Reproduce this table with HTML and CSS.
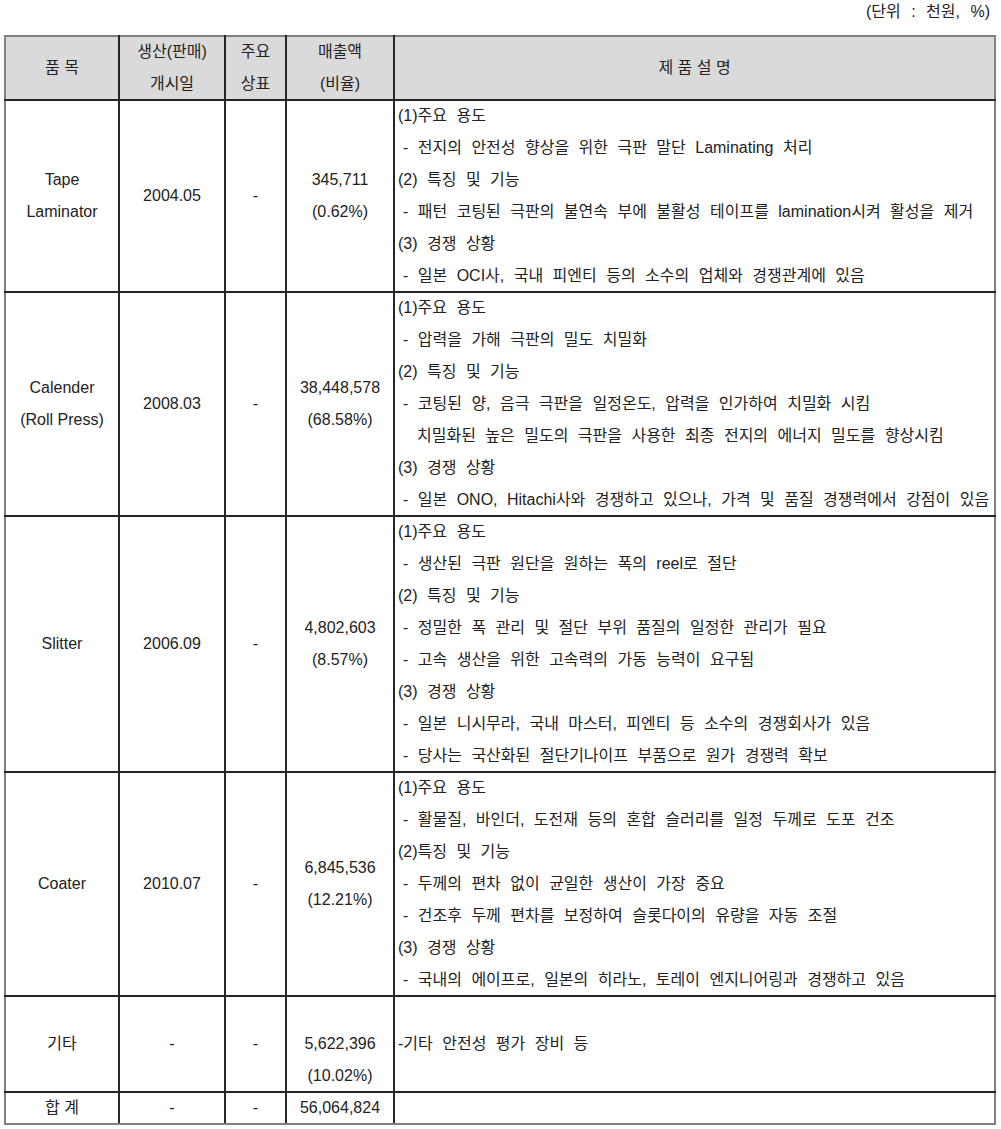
FILE: index.html
```html
<!DOCTYPE html>
<html lang="ko">
<head>
<meta charset="utf-8">
<link rel="stylesheet" href="styles.css">
</head>
<body>
<div class="page">
  <div class="unit">(단위 : 천원, %)</div>
  <table class="prod">
    <colgroup>
      <col class="c1"><col class="c2"><col class="c3"><col class="c4"><col class="c5">
    </colgroup>
    <thead>
      <tr>
        <th><div class="ln">품 목</div></th>
        <th><div class="ln">생산(판매)</div><div class="ln">개시일</div></th>
        <th><div class="ln">주요</div><div class="ln">상표</div></th>
        <th><div class="ln">매출액</div><div class="ln">(비율)</div></th>
        <th><div class="ln">제 품 설 명</div></th>
      </tr>
    </thead>
    <tbody>
      <tr>
        <td><div class="ln">Tape</div><div class="ln">Laminator</div></td>
        <td><div class="ln">2004.05</div></td>
        <td><div class="ln">-</div></td>
        <td><div class="ln">345,711</div><div class="ln">(0.62%)</div></td>
        <td class="desc">
          <div class="ln">(1)주요 용도</div>
          <div class="ln sub">- 전지의 안전성 향상을 위한 극판 말단 Laminating 처리</div>
          <div class="ln">(2) 특징 및 기능</div>
          <div class="ln sub">- 패턴 코팅된 극판의 불연속 부에 불활성 테이프를 lamination시켜 활성을 제거</div>
          <div class="ln">(3) 경쟁 상황</div>
          <div class="ln sub">- 일본 OCI사, 국내 피엔티 등의 소수의 업체와 경쟁관계에 있음</div>
        </td>
      </tr>
      <tr>
        <td><div class="ln">Calender</div><div class="ln">(Roll Press)</div></td>
        <td><div class="ln">2008.03</div></td>
        <td><div class="ln">-</div></td>
        <td><div class="ln">38,448,578</div><div class="ln">(68.58%)</div></td>
        <td class="desc">
          <div class="ln">(1)주요 용도</div>
          <div class="ln sub">- 압력을 가해 극판의 밀도 치밀화</div>
          <div class="ln">(2) 특징 및 기능</div>
          <div class="ln sub">- 코팅된 양, 음극 극판을 일정온도, 압력을 인가하여 치밀화 시킴</div>
          <div class="ln cont">치밀화된 높은 밀도의 극판을 사용한 최종 전지의 에너지 밀도를 향상시킴</div>
          <div class="ln">(3) 경쟁 상황</div>
          <div class="ln sub">- 일본 ONO, Hitachi사와 경쟁하고 있으나, 가격 및 품질 경쟁력에서 강점이 있음</div>
        </td>
      </tr>
      <tr>
        <td><div class="ln">Slitter</div></td>
        <td><div class="ln">2006.09</div></td>
        <td><div class="ln">-</div></td>
        <td><div class="ln">4,802,603</div><div class="ln">(8.57%)</div></td>
        <td class="desc">
          <div class="ln">(1)주요 용도</div>
          <div class="ln sub">- 생산된 극판 원단을 원하는 폭의 reel로 절단</div>
          <div class="ln">(2) 특징 및 기능</div>
          <div class="ln sub">- 정밀한 폭 관리 및 절단 부위 품질의 일정한 관리가 필요</div>
          <div class="ln sub">- 고속 생산을 위한 고속력의 가동 능력이 요구됨</div>
          <div class="ln">(3) 경쟁 상황</div>
          <div class="ln sub">- 일본 니시무라, 국내 마스터, 피엔티 등 소수의 경쟁회사가 있음</div>
          <div class="ln sub">- 당사는 국산화된 절단기나이프 부품으로 원가 경쟁력 확보</div>
        </td>
      </tr>
      <tr>
        <td><div class="ln">Coater</div></td>
        <td><div class="ln">2010.07</div></td>
        <td><div class="ln">-</div></td>
        <td><div class="ln">6,845,536</div><div class="ln">(12.21%)</div></td>
        <td class="desc">
          <div class="ln">(1)주요 용도</div>
          <div class="ln sub">- 활물질, 바인더, 도전재 등의 혼합 슬러리를 일정 두께로 도포 건조</div>
          <div class="ln">(2)특징 및 기능</div>
          <div class="ln sub">- 두께의 편차 없이 균일한 생산이 가장 중요</div>
          <div class="ln sub">- 건조후 두께 편차를 보정하여 슬롯다이의 유량을 자동 조절</div>
          <div class="ln">(3) 경쟁 상황</div>
          <div class="ln sub">- 국내의 에이프로, 일본의 히라노, 토레이 엔지니어링과 경쟁하고 있음</div>
        </td>
      </tr>
      <tr>
        <td><div class="ln">기타</div></td>
        <td><div class="ln">-</div></td>
        <td><div class="ln">-</div></td>
        <td><div class="ln"></div><div class="ln">5,622,396</div><div class="ln">(10.02%)</div></td>
        <td class="desc"><div class="ln">-기타 안전성 평가 장비 등</div></td>
      </tr>
      <tr>
        <td><div class="ln">합 계</div></td>
        <td><div class="ln">-</div></td>
        <td><div class="ln">-</div></td>
        <td><div class="ln">56,064,824</div></td>
        <td class="desc"><div class="ln"></div></td>
      </tr>
    </tbody>
  </table>
</div>
</body>
</html>
```

FILE: styles.css
```css
html, body {
  margin: 0;
  padding: 0;
  background: #ffffff;
}

.page {
  padding: 0 5px 0 4px;
  font-family: "Liberation Sans", "Noto Sans CJK KR", sans-serif;
  font-size: 16px;
  color: #222222;
}

.unit {
  text-align: right;
  line-height: 24px;
  height: 24px;
  padding-right: 6px;
  margin-bottom: 11px;
  word-spacing: 6px;
}

.prod {
  width: 992px;
  border-collapse: collapse;
  table-layout: fixed;
  border: 2px solid #808080;
}

.c1 { width: 114px; }
.c2 { width: 106px; }
.c3 { width: 61px; }
.c4 { width: 108px; }
.c5 { width: auto; }

.prod th,
.prod td {
  border: 2px solid #262626;
  padding: 0 2px;
  text-align: center;
  vertical-align: middle;
  font-weight: normal;
}

.prod th {
  background: #dadada;
}

.ln {
  height: 32px;
  line-height: 32px;
  white-space: pre;
}

.prod th > .ln:first-child,
.prod td > .ln:first-child { margin-top: -1px; }
.prod th > .ln:last-child,
.prod td > .ln:last-child { margin-bottom: -1px; }

.prod tr > :first-child { border-left-color: #808080; }
.prod tr > :last-child { border-right-color: #808080; }
.prod thead th { border-top-color: #808080; }
.prod tbody tr:last-child td { border-bottom-color: #808080; }

.prod td.desc {
  text-align: left;
  padding-left: 3px;
  word-spacing: 5px;
}

.desc .sub { padding-left: 5px; }
.desc .cont { padding-left: 19px; }
```
